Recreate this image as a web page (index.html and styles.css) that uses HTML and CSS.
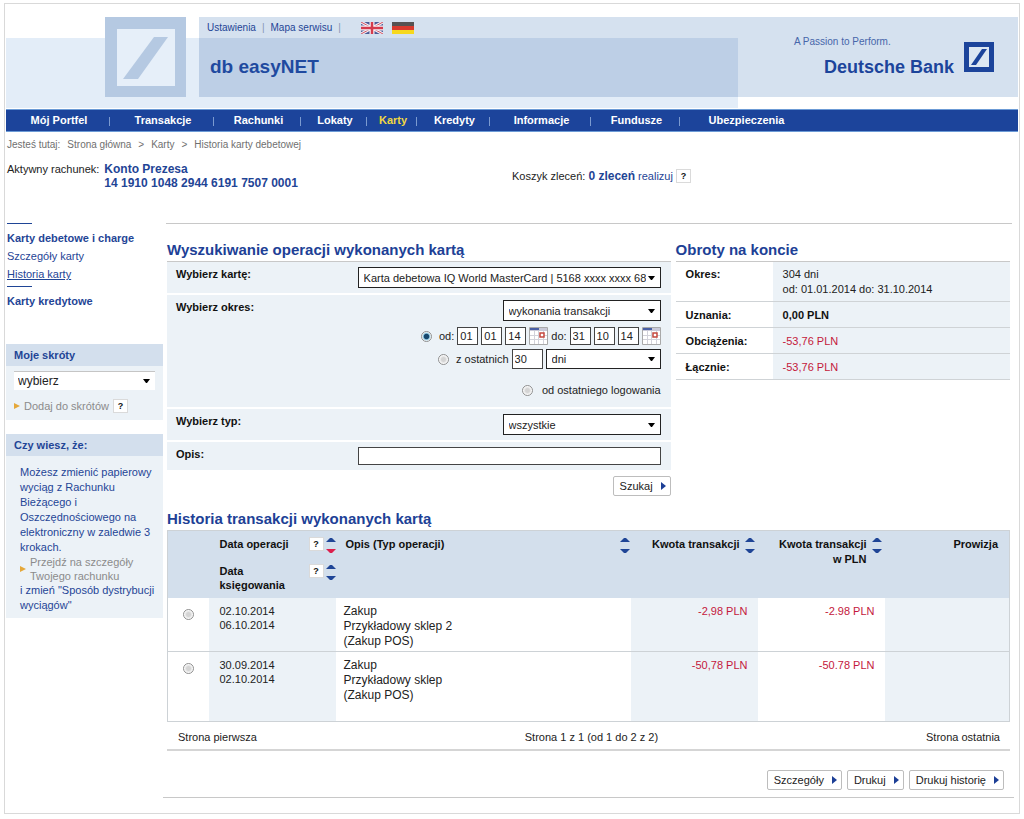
FILE: index.html
```html
<!DOCTYPE html>
<html lang="pl">
<head>
<meta charset="utf-8">
<title>db easyNET</title>
<link rel="stylesheet" href="styles.css">
</head>
<body>
<svg class="defs" width="0" height="0" aria-hidden="true">
  <symbol id="sort" viewBox="0 0 10 16"><path d="M0 5L4 1h2l4 4z" fill="#1f4596"/><path class="down" d="M0 12h10l-4 4H4z"/></symbol>
  <symbol id="cal" viewBox="0 0 19 18">
    <path fill="#fff" stroke="#a9a9a9" d="M.5.500h18v17H.5z"/><path fill="#c9c9d8" d="M1 1h17v3H1z"/><path fill="#4a5fa5" d="M1 1h9v2H1z"/>
    <path stroke="#d2d2da" d="M5.500 4v13M9.500 4v13M14.500 4v13M1 8.500h17M1 12.500h17"/>
    <path fill="#fff" stroke="#c5483f" stroke-width="1.500" d="M11 6h4v4h-4z"/>
  </symbol>
</svg>
<div class="frame">
  <header class="header">
    <div class="emblem">
      <svg viewBox="0 0 81 80" width="81" height="80" aria-hidden="true"><path fill="#b5c9e2" d="M0 0h81v80H0z"/><path fill="#e6eff9" d="M12 12h58v57H12z"/><path fill="#b5c9e2" d="M49 20h14L33 62H18z"/></svg>
    </div>
    <div class="banner">
      <div class="banner-left">
        <nav class="tools" aria-label="Ustawienia">
          <a href="#">Ustawienia</a><span>|</span><a href="#">Mapa serwisu</a><span>|</span>
          <a class="flag" href="#" aria-label="English"><svg width="22" height="12" viewBox="0 0 22 12"><path fill="#4c5a96" d="M0 0h22v12H0z"/><path stroke="#f2eef4" stroke-width="3" d="M0 0l22 12M22 0L0 12"/><path stroke="#d2505f" d="M0 0l22 12M22 0L0 12"/><path stroke="#f6f2f6" stroke-width="5" d="M11 0v12M0 6h22"/><path stroke="#d43a4c" stroke-width="2.500" d="M11 0v12M0 6h22"/></svg></a>
          <a class="flag" href="#" aria-label="Deutsch"><svg width="22" height="12" viewBox="0 0 22 12"><path fill="#565353" d="M0 0h22v4H0z"/><path fill="#d83a2e" d="M0 4h22v4H0z"/><path fill="#f6d81e" d="M0 8h22v4H0z"/></svg></a>
        </nav>
        <div class="product">db easyNET</div>
      </div>
      <div class="brand">
        <div><div class="motto">A Passion to Perform.</div><div class="bank">Deutsche Bank</div></div>
        <svg width="30" height="30" viewBox="0 0 30 30" aria-hidden="true"><path fill="#1c449b" d="M0 0h30v30H0z"/><path fill="#dde7f2" d="M5 5h20v20H5z"/><path fill="#1c449b" d="M18 7h5L12 23H7z"/></svg>
      </div>
    </div>
  </header>
  <nav class="mainnav" aria-label="Menu">
    <a href="#">Mój Portfel</a><a href="#">Transakcje</a><a href="#">Rachunki</a><a href="#">Lokaty</a><a href="#" class="active">Karty</a><a href="#">Kredyty</a><a href="#">Informacje</a><a href="#">Fundusze</a><a href="#">Ubezpieczenia</a>
  </nav>
  <div class="crumbs"><span>Jesteś tutaj:</span><a href="#">Strona główna</a><span>&gt;</span><a href="#">Karty</a><span>&gt;</span><span>Historia karty debetowej</span></div>
  <div class="account">
    <div class="acc-left"><span>Aktywny rachunek:</span><b>Konto Prezesa<br>14 1910 1048 2944 6191 7507 0001</b></div>
    <div class="basket"><span>Koszyk zleceń:</span><b>0 zleceń</b><a href="#">realizuj</a><button class="help" type="button">?</button></div>
  </div>
  <div class="columns">
    <aside class="sidebar">
      <nav class="sidenav" aria-label="Karty">
        <hr><a class="strong" href="#">Karty debetowe i charge</a><a href="#">Szczegóły karty</a><a class="current" href="#">Historia karty</a>
        <hr><a class="strong" href="#">Karty kredytowe</a>
      </nav>
      <section class="box">
        <h2><label for="shortcut">Moje skróty</label></h2>
        <div class="shortcuts">
          <select id="shortcut" class="shortcut"><option>wybierz</option></select>
          <div class="add"><i class="tri"></i><a href="#">Dodaj do skrótów</a><button class="help" type="button">?</button></div>
        </div>
      </section>
      <section class="box">
        <h2>Czy wiesz, że:</h2>
        <div class="tip">
          <p>Możesz zmienić papierowy wyciąg z Rachunku<br>Bieżącego i Oszczędnościowego na elektroniczny w zaledwie 3 krokach.</p>
          <div class="tiplink"><i class="tri"></i><a href="#">Przejdź na szczegóły Twojego rachunku</a></div>
          <p>i zmień "Sposób dystrybucji wyciągów"</p>
        </div>
      </section>
    </aside>
    <main class="main">
      <div class="top">
        <form class="search">
          <h1>Wyszukiwanie operacji wykonanych kartą</h1>
          <div class="row r-card"><label for="card">Wybierz kartę:</label>
            <select id="card" class="full"><option>Karta debetowa IQ World MasterCard | 5168 xxxx xxxx 68</option></select></div>
          <div class="row r-period"><label for="kind">Wybierz okres:</label>
            <div class="period">
              <select id="kind" class="half"><option>wykonania transakcji</option></select>
              <div class="line dates"><input type="radio" name="p" id="p1" checked><label for="p1">od:</label>
                <input type="text" value="01" aria-label="od dzień"><input type="text" value="01" aria-label="od miesiąc"><input type="text" value="14" aria-label="od rok"><button class="cal" type="button" aria-label="Kalendarz od"><svg width="19" height="18"><use href="#cal"/></svg></button>
                <span>do:</span><input type="text" value="31" aria-label="do dzień"><input type="text" value="10" aria-label="do miesiąc"><input type="text" value="14" aria-label="do rok"><button class="cal" type="button" aria-label="Kalendarz do"><svg width="19" height="18"><use href="#cal"/></svg></button></div>
              <div class="line last"><input type="radio" name="p" id="p2"><label for="p2">z ostatnich</label><input type="text" value="30" class="num" aria-label="liczba"><select class="unit" aria-label="jednostka"><option>dni</option></select></div>
              <div class="line login"><input type="radio" name="p" id="p3"><label for="p3">od ostatniego logowania</label></div>
            </div></div>
          <div class="row r-type"><label for="type">Wybierz typ:</label><select id="type" class="half"><option>wszystkie</option></select></div>
          <div class="row r-desc"><label for="desc">Opis:</label><input id="desc" type="text" class="full desc"></div>
          <div class="submit"><button class="btn" type="button">Szukaj<i></i></button></div>
        </form>
        <section class="summary">
          <h2>Obroty na koncie</h2>
          <table>
            <tr class="tall"><th scope="row">Okres:</th><td>304 dni<br>od: 01.01.2014 do: 31.10.2014</td></tr>
            <tr><th scope="row">Uznania:</th><td class="plus">0,00 PLN</td></tr>
            <tr><th scope="row">Obciążenia:</th><td class="minus">-53,76 PLN</td></tr>
            <tr><th scope="row">Łącznie:</th><td class="minus">-53,76 PLN</td></tr>
          </table>
        </section>
      </div>
      <section class="history">
        <h2>Historia transakcji wykonanych kartą</h2>
        <table>
          <colgroup><col class="c1"><col class="c2"><col class="c3"><col class="c4"><col class="c4"><col class="c6"></colgroup>
          <thead><tr><th></th>
            <th><div class="datehead"><span>Data operacji</span><button class="help" type="button">?</button><svg class="sort desc-on" width="10" height="16"><use href="#sort"/></svg>
              <span>Data księgowania</span><button class="help" type="button">?</button><svg class="sort" width="10" height="16"><use href="#sort"/></svg></div></th>
            <th><div class="head spread"><span>Opis (Typ operacji)</span><svg class="sort" width="10" height="16"><use href="#sort"/></svg></div></th>
            <th><div class="head end"><span>Kwota transakcji</span><svg class="sort" width="10" height="16"><use href="#sort"/></svg></div></th>
            <th><div class="head end"><span>Kwota transakcji<br>w PLN</span><svg class="sort" width="10" height="16"><use href="#sort"/></svg></div></th>
            <th class="fee">Prowizja</th></tr></thead>
          <tbody>
            <tr class="t1"><td class="pick"><input type="radio" name="t" aria-label="Zakup 02.10.2014"></td><td class="date">02.10.2014<br>06.10.2014</td><td class="what">Zakup<br>Przykładowy sklep 2<br>(Zakup POS)</td><td class="amount">-2,98 PLN</td><td class="amount">-2.98 PLN</td><td></td></tr>
            <tr class="t2"><td class="pick"><input type="radio" name="t" aria-label="Zakup 30.09.2014"></td><td class="date">30.09.2014<br>02.10.2014</td><td class="what">Zakup<br>Przykładowy sklep<br>(Zakup POS)</td><td class="amount">-50,78 PLN</td><td class="amount">-50.78 PLN</td><td></td></tr>
          </tbody>
        </table>
        <div class="pager"><span>Strona pierwsza</span><span>Strona 1 z 1 (od 1 do 2 z 2)</span><span>Strona ostatnia</span></div>
      </section>
      <div class="actions"><button class="btn" type="button">Szczegóły<i></i></button><button class="btn" type="button">Drukuj<i></i></button><button class="btn" type="button">Drukuj historię<i></i></button></div>
    </main>
  </div>
</div>
</body>
</html>
```
FILE: styles.css
```css
* { box-sizing: border-box; }
body { margin: 3px 4px 5px; background: #fff; color: #222; font: 11px/14px "Liberation Sans", Arial, sans-serif; }
.defs { display: block; }
h1, h2, p, hr { margin: 0; }
a { color: #1f4596; text-decoration: none; }
button, input, select { font: inherit; color: inherit; margin: 0; }
.frame { border: 1px solid #d9d9d9; padding: 13px 1px 15px; }

.header { display: flex; gap: 13px; height: 92px; padding-left: 99px; background: linear-gradient(#e3edf8, #e3edf8) 0 21px / 732px 70px no-repeat; }
.emblem svg { display: block; }
.banner { flex: 1; display: flex; justify-content: space-between; height: 80px; background: linear-gradient(#bdcfe6, #bdcfe6) 0 21px / 539px 59px no-repeat #d5e1ef; }
.tools { display: flex; align-items: center; gap: 6px; height: 21px; padding-left: 8px; font-size: 10px; line-height: 12px; }
.tools span { color: #8797b5; }
.flag { display: flex; margin-left: 14px; }
.flag + .flag { margin-left: 3px; }
.product { padding: 18px 0 0 11px; color: #1f4aa0; font-size: 19px; line-height: 22px; font-weight: bold; }
.brand { display: flex; gap: 10px; padding: 19px 24px 0 0; color: #1c449b; }
.brand svg { margin-top: 6px; }
.brand > div { text-align: right; }
.motto { margin-bottom: 8px; text-align: left; font-size: 10px; line-height: 12px; color: #4766aa; }
.bank { padding-left: 30px; font-size: 18px; line-height: 22px; font-weight: bold; }

.mainnav { display: grid; grid-template-columns: 104px 104px 87px 66px 50px 73px 101px 89px 131px; height: 23px; background: #1c449b; border: solid #6c9bd6; border-width: 1px 0; }
.mainnav a { color: #fff; font-weight: bold; line-height: 21px; text-align: center; padding-left: 2px; background: linear-gradient(#7b9ad0, #7b9ad0) 100% 7px / 1px 9px no-repeat; }
.mainnav a:last-child { background: none; }
.mainnav .active { color: #f0d743; }

.crumbs { display: flex; gap: 7px; padding: 6px 1px 0; height: 27px; font-size: 10px; color: #6f6f6f; }
.crumbs a { color: inherit; }
.account { display: grid; grid-template-columns: 505px 1fr; height: 64px; padding: 3px 1px 0; }
.acc-left { display: flex; gap: 5px; }
.acc-left b, .basket b { color: #1f4596; font-size: 12px; }
.basket { display: flex; align-items: center; height: 28px; gap: 3px; }
.help { display: inline-block; width: 15px; height: 14px; padding: 0; border: 1px solid #dadada; background: #fff; color: #111; font: bold 9px/11px "Liberation Sans", Arial, sans-serif; text-align: center; }

.columns { display: grid; grid-template-columns: 157px 1fr; }
.sidenav { display: flex; flex-direction: column; align-items: flex-start; height: 121px; padding-left: 1px; }
.sidenav hr { width: 25px; height: 1px; border: 0; background: #1f4596; }
.sidenav a { line-height: 18px; }
.sidenav .strong { font-weight: bold; margin-top: 5px; }
.sidenav .current { text-decoration: underline; margin-bottom: 3px; }
.box { margin-bottom: 14px; background: #ecf2f7; }
.box h2 { padding-left: 8px; font-size: 11px; line-height: 22px; color: #1f4596; background: #d3dfed; }
.shortcuts { padding: 5px 8px 6px; }
.add { display: flex; align-items: center; gap: 4px; height: 16px; margin-top: 8px; }
.add a, .tiplink a { color: #8b8b8b; }
.tri { width: 0; height: 0; border: solid transparent; border-width: 3px 0 3px 6px; border-left-color: #e5a83a; }
.tip { padding: 9px 4px 5px 14px; color: #1f4596; line-height: 15px; }
.tiplink { display: flex; align-items: center; gap: 4px; line-height: 14px; }

select { appearance: none; height: 21px; padding: 0 14px 0 5px; border: 1px solid #222; border-radius: 0; background: url("data:image/svg+xml,%3Csvg xmlns='http://www.w3.org/2000/svg' width='7' height='4'%3E%3Cpath d='M0 0h7L4 4H3z'/%3E%3C/svg%3E") right 5px center no-repeat #fff; }
.shortcut { width: 100%; height: 19px; padding-left: 4px; border: 0; border-top: 1px solid #c5c5c5; font-size: 12px; }
input[type="text"] { height: 18px; padding: 0 2px; border: 1px solid #444; background: #fff; }
input[type="radio"] { appearance: none; flex: none; width: 11px; height: 11px; border: 1px solid #8f8f8f; border-radius: 50%; background: radial-gradient(#d4d4d4 30%, #fff 70%); }
input[type="radio"]:checked { background: radial-gradient(circle, #17486e 0 35%, #8cc4dd 50%, #fff 70%); }

.main { border-top: 1px solid #c8c8c8; margin: 0 6px 0 3px; padding: 17px 2px 0 1px; }
.main h1, .main h2 { font-size: 15px; line-height: 18px; color: #203f96; white-space: nowrap; }
.top { display: grid; grid-template-columns: 503fr 334fr; gap: 5px; }
.search h1, .summary h2 { margin-bottom: 2px; }
.row { display: flex; justify-content: space-between; align-items: flex-start; padding: 5px 10px 5px 9px; background: #ecf2f7; border-bottom: 1px solid #fff; margin-bottom: 1px; }
.row > label { font-weight: bold; color: #111; }
.r-card { border-top: 1px solid #c8c8c8; }
.full { width: 303px; }
.half { width: 158px; }
.desc { height: 18px; }
.period { display: flex; flex-direction: column; align-items: flex-end; padding-bottom: 3px; }
.line { display: flex; align-items: center; gap: 3px; }
.dates { margin: 6px 0 4px; }
.dates input[type="text"] { width: 21px; }
.dates label { margin-left: 4px; }
.cal { display: flex; padding: 0; border: 0; background: none; }
.last select { width: 115px; height: 20px; }
.last input.num { width: 31px; height: 20px; }
.last label { margin-left: 4px; }
.login { margin-top: 13px; gap: 9px; line-height: 17px; }
.r-desc { border: 0; margin: 0; }
.submit { display: flex; justify-content: flex-end; padding-top: 6px; }
.btn { display: flex; align-items: center; gap: 8px; height: 20px; padding: 0 4px 0 6px; border: 1px solid #bdbdbd; border-radius: 2px; background: #fff; color: #222; }
.btn i { border: solid transparent; border-width: 4px 0 4px 5px; border-left-color: #1c3f96; }

table { width: 100%; border-collapse: collapse; }
th, td { padding: 0; text-align: left; vertical-align: top; }
.summary tr { height: 26px; border-bottom: 1px solid #cfd3d6; }
.summary .tall { border-top: 1px solid #c8c8c8; height: 40px; }
.summary th { width: 97px; padding: 6px 0 0 10px; color: #111; }
.summary td { padding: 6px 0 5px 10px; background: #ecf2f7; }
.summary .tall th { padding-top: 5px; }
.summary .tall td { line-height: 15px; padding: 5px 0 4px 10px; }
.plus { font-weight: bold; color: #111; }
.minus, .amount { color: #c4183b; }

.history { margin-top: 14px; }
.history h2 { margin-bottom: 2px; }
.history table { table-layout: fixed; border: 1px solid #cdd2d6; }
.c1 { width: 41px; } .c2 { width: 127px; } .c4 { width: 127px; } .c6 { width: 125px; }
thead th { height: 67px; background: #d3dfec; color: #111; padding-top: 6px; }
.datehead { display: grid; grid-template-columns: 84px 15px 10px; column-gap: 5px; row-gap: 11px; padding-left: 11px; align-items: start; }
.datehead .sort { margin-left: -3px; }
.sort { fill: #1f4596; flex: none; }
.desc-on { fill: #dc1f4c; }
.head { display: flex; gap: 5px; padding-right: 1px; line-height: 15px; }
.end { justify-content: flex-end; text-align: right; padding-right: 3px; }
.spread { justify-content: space-between; padding-left: 10px; }
th.fee { text-align: right; padding-right: 11px; }
tbody tr { border-top: 1px solid #cdd2d6; }
tbody .t1 { height: 54px; border-top: 0; }
tbody .t2 { height: 70px; }
.history tbody td { padding-top: 6px; }
.history tbody td:nth-child(even), .history tbody td:last-child { background: #ecf2f7; }
.history tbody td.pick { padding: 11px 0 0 15px; }
.history tbody td:nth-child(5) { background: #fff; }
.pick input { display: block; }
.date { padding-left: 11px; }
.what { padding-left: 8px; font-size: 12px; line-height: 15px; }
.amount { text-align: right; padding-right: 10px; }
.pager { display: flex; justify-content: space-between; padding: 8px 10px 5px 11px; border-bottom: 2px solid #d5d5d5; }
.actions { display: flex; justify-content: flex-end; gap: 5px; margin: 19px -4px 0; padding: 0 10px 7px 0; border-bottom: 1px solid #c8c8c8; }
```
